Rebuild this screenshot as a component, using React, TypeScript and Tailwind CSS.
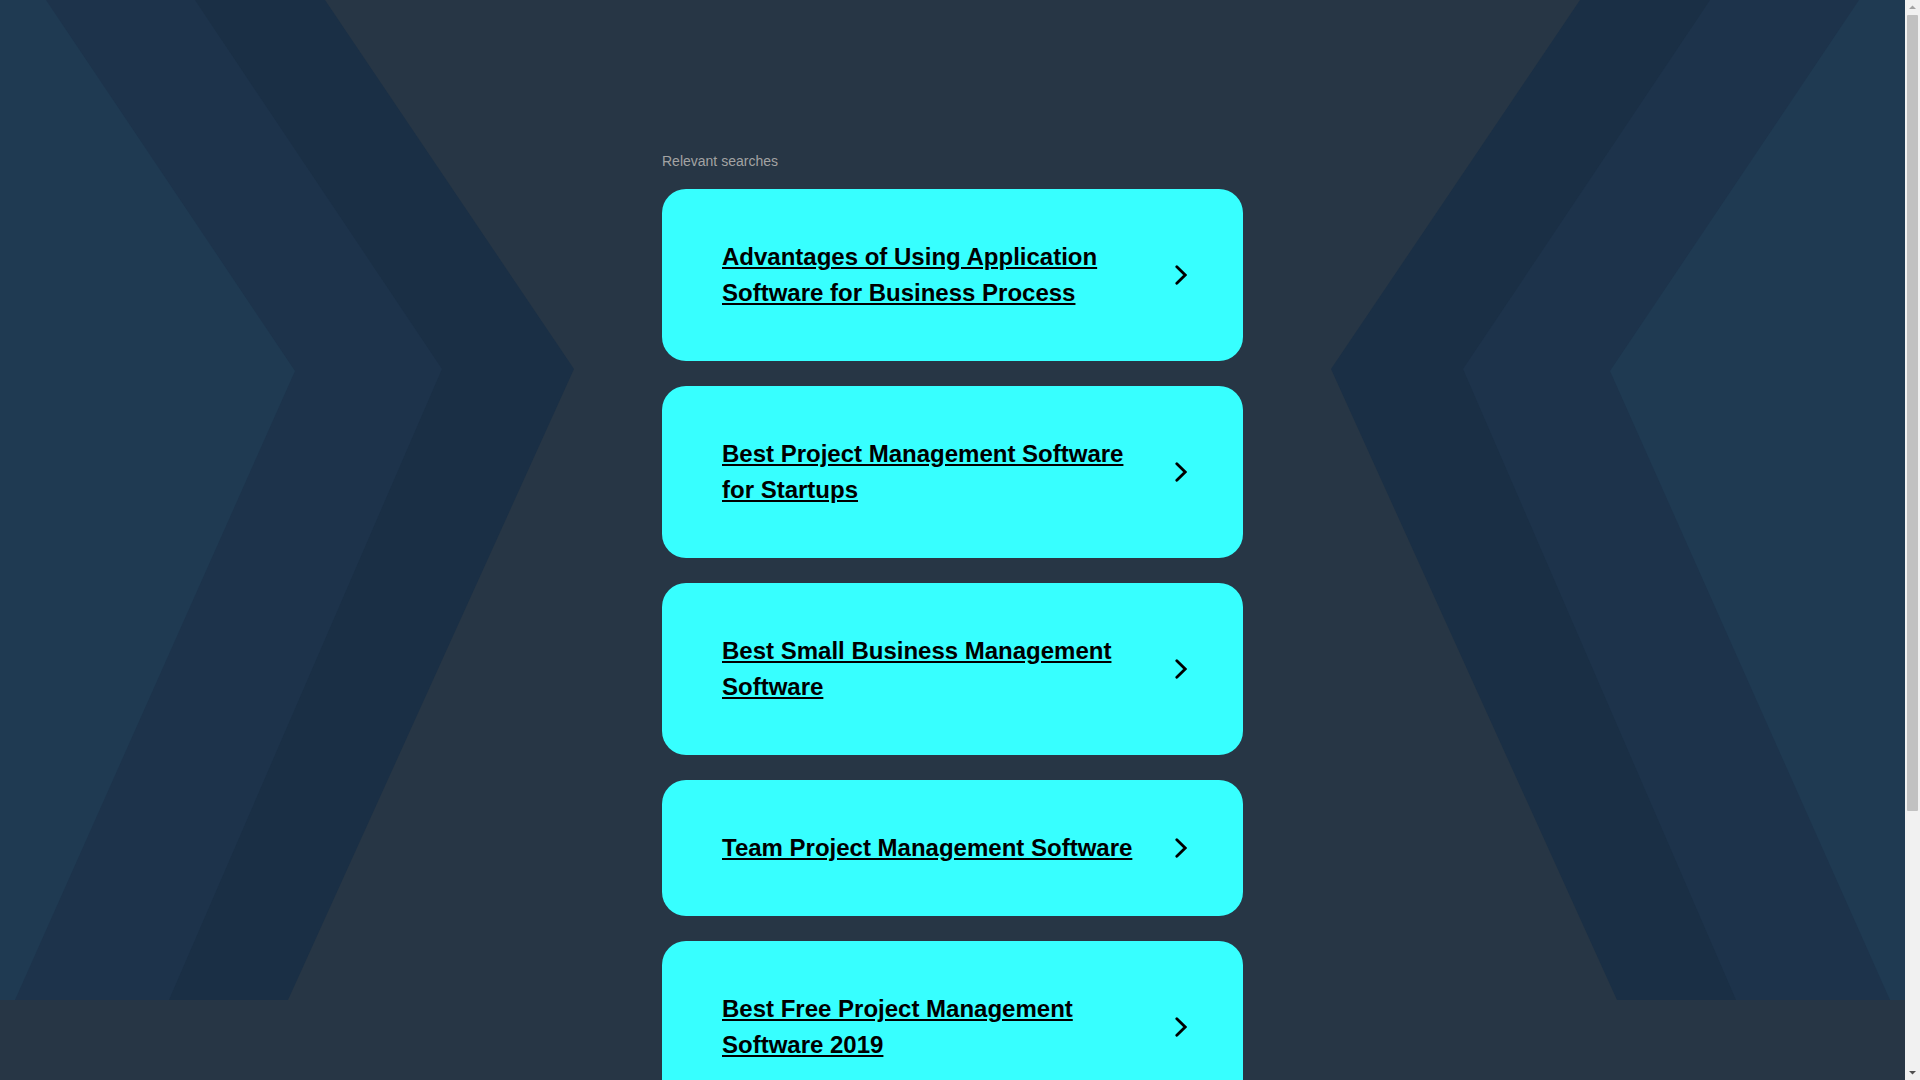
import React from 'react';

const searches = [
    'Advantages of Using Application Software for Business Process',
    'Best Project Management Software for Startups',
    'Best Small Business Management Software',
    'Team Project Management Software',
    'Best Free Project Management Software 2019',
];

const Backdrop = () => (
    <svg
        className="absolute top-0 left-0 w-full h-[1000px]"
        viewBox="0 0 1905 1000"
        preserveAspectRatio="none"
        aria-hidden="true"
    >
        <polygon points="0,0 325,0 574,369 288,1000 0,1000" fill="#1a2f45" />
        <polygon points="0,0 195,0 442,369 169,1000 0,1000" fill="#1d334b" />
        <polygon points="0,0 46,0 295,371 15,1000 0,1000" fill="#1f3a52" />
        <polygon points="1905,0 1580,0 1331,369 1617,1000 1905,1000" fill="#1a2f45" />
        <polygon points="1905,0 1710,0 1463,369 1736,1000 1905,1000" fill="#1d334b" />
        <polygon points="1905,0 1859,0 1610,371 1890,1000 1905,1000" fill="#1f3a52" />
    </svg>
);

const Chevron = () => (
    <svg width="12" height="20" viewBox="0 0 12 20" className="shrink-0">
        <polyline
            points="1.8,1.8 10.2,10 1.8,18.2"
            fill="none"
            stroke="#000"
            strokeWidth="2.8"
            strokeLinecap="round"
            strokeLinejoin="miter"
        />
    </svg>
);

// page scrollbar, as it shows in the screenshot
const Scrollbar = () => (
    <div className="w-[15px] shrink-0 bg-[#f1f1f1] flex flex-col items-center">
        <svg width="15" height="15" viewBox="0 0 15 15">
            <polygon points="4,9 11,9 7.5,5.5" fill="#a3a3a3" />
        </svg>
        <div className="w-[11px] h-[796px] rounded-[1px] bg-[#c1c1c1]" />
        <div className="flex-1" />
        <svg width="15" height="15" viewBox="0 0 15 15">
            <polygon points="4,6 11,6 7.5,9.5" fill="#505050" />
        </svg>
    </div>
);

const App = () => {
    return (
        <div className="flex h-screen overflow-hidden bg-[#273645] font-['Liberation_Sans',Arial,sans-serif]">
            <div className="relative flex-1 min-h-[1425px]">
                <Backdrop />
                <div className="relative w-[581px] mx-auto pt-[151px] pb-[300px]">
                    <p className="text-[14px] leading-[20px] text-[#a3a3a3] mb-[18px]">Relevant searches</p>
                    <div className="flex flex-col gap-[25px]">
                        {searches.map((s) => (
                            <a
                                key={s}
                                href="#"
                                className="flex items-center gap-8 bg-[#37ffff] rounded-3xl pl-[60px] pr-[56px] py-[50px]"
                            >
                                <span className="flex-1 text-[24px] leading-[36px] font-bold text-black underline">
                                    {s}
                                </span>
                                <Chevron />
                            </a>
                        ))}
                    </div>
                </div>
            </div>
            <Scrollbar />
        </div>
    );
};

export default App;
